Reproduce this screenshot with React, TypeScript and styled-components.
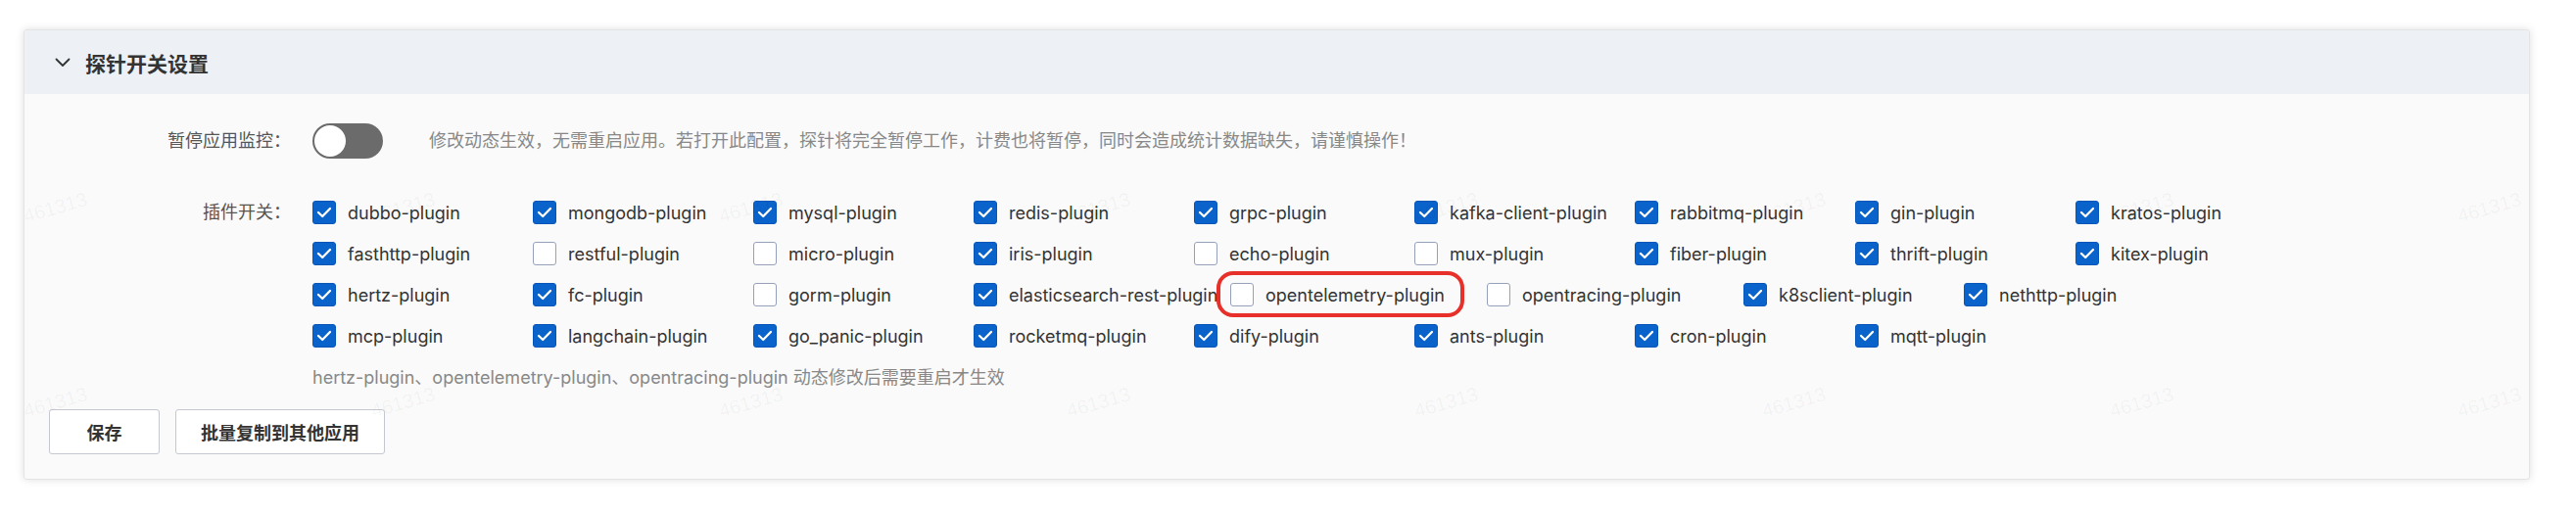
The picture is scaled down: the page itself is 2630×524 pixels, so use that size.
import React from "react";
import styled, { createGlobalStyle, css } from "styled-components";

const GlobalStyle = createGlobalStyle`
  html, body { margin: 0; padding: 0; background: #ffffff; }
  body {
    font-family: Inter, "Noto Sans CJK SC", sans-serif;
    font-size: 18px;
    color: #333;
    -webkit-font-smoothing: antialiased;
  }
  * { box-sizing: border-box; }
`;

const Page = styled.div`
  position: relative;
  width: 2630px;
  height: 524px;
  padding: 30px 47px 0 24px;
  overflow: hidden;
`;

const Card = styled.section`
  background: #fafafa;
  border: 1px solid #e4e4e4;
  border-radius: 3px;
  box-shadow: 0 0 8px rgba(0, 0, 0, 0.13);
  overflow: hidden;
`;

const Header = styled.div`
  height: 65px;
  background: #edf0f5;
  display: flex;
  align-items: center;
  gap: 15px;
  padding-left: 31px;
`;

const Title = styled.h3`
  margin: 0;
  font-size: 21px;
  font-weight: 600;
  color: #333;
  letter-spacing: 0;
`;

const Body = styled.div`
  padding: 30px 0 25px 0;
`;

const FormItem = styled.div<{ $top?: number; $align?: string }>`
  display: flex;
  align-items: ${(p) => p.$align || "center"};
  margin-top: ${(p) => p.$top || 0}px;
`;

const Label = styled.label<{ $lh?: number }>`
  width: 272px;
  flex: none;
  text-align: right;
  color: #555;
  font-size: 18px;
  line-height: ${(p) => p.$lh || 36}px;
`;

const Control = styled.div`
  margin-left: 22px;
  display: flex;
  flex-direction: column;
`;

const InlineControl = styled.div`
  margin-left: 22px;
  display: flex;
  align-items: center;
`;

const SwitchTrack = styled.button`
  width: 72px;
  height: 36px;
  border: none;
  border-radius: 18px;
  background: #6b6b6b;
  padding: 2px;
  display: flex;
  align-items: center;
  cursor: pointer;
`;

const SwitchKnob = styled.span`
  width: 32px;
  height: 32px;
  border-radius: 50%;
  background: #ffffff;
`;

const Description = styled.span`
  margin-left: 47px;
  color: #888;
  font-size: 18px;
  line-height: 24px;
`;

const PluginGrid = styled.div`
  display: flex;
  flex-wrap: wrap;
  width: 2030px;
`;

const PluginItem = styled.label<{ $wide?: boolean; $marked?: boolean }>`
  position: relative;
  height: 42px;
  width: ${(p) => (p.$wide ? 262 : 225)}px;
  display: flex;
  align-items: center;
  gap: 12px;
  color: #333;
  font-size: 18px;
  white-space: nowrap;
  ${(p) =>
    p.$marked &&
    css`
      &::after {
        content: "";
        position: absolute;
        top: -3px;
        bottom: -2px;
        left: -14px;
        right: 23px;
        border: 4px solid #e8302a;
        border-radius: 17px;
        pointer-events: none;
      }
    `}
`;

const Box = styled.span<{ $checked: boolean }>`
  width: 24px;
  height: 24px;
  flex: none;
  border-radius: 3px;
  display: flex;
  align-items: center;
  justify-content: center;
  ${(p) =>
    p.$checked
      ? css`
          background: #0a62cb;
          border: 1px solid #0857b8;
        `
      : css`
          background: #ffffff;
          border: 1.5px solid #95a1bb;
        `}
`;

const Hint = styled.div`
  margin-top: 10px;
  color: #888;
  font-size: 18px;
  line-height: 24px;
`;

const ButtonRow = styled.div`
  display: flex;
  gap: 16px;
  margin-top: 20px;
  padding-left: 25px;
`;

const Button = styled.button`
  height: 46px;
  min-width: 113px;
  padding: 0 25px;
  background: #ffffff;
  border: 1px solid #c5c8d0;
  border-radius: 3px;
  font-family: inherit;
  font-size: 18px;
  font-weight: 600;
  color: #333;
  cursor: pointer;
`;

const WatermarkLayer = styled.div`
  position: absolute;
  inset: 0;
  pointer-events: none;
  display: grid;
  grid-template-columns: repeat(8, 355px);
  grid-auto-rows: 199px;
  padding: 202px 0 0 23px;
`;

const Watermark = styled.span`
  width: 66px;
  height: 20px;
  font-family: "Liberation Sans", sans-serif;
  font-size: 20px;
  line-height: 20px;
  color: rgba(0, 0, 0, 0.045);
  transform: rotate(-16deg);
`;

const Chevron = () => (
  <svg width="16" height="10" viewBox="0 0 16 10" fill="none">
    <path d="M1.5 1.5 L8 8 L14.5 1.5" stroke="#333" strokeWidth="1.8" strokeLinecap="round" strokeLinejoin="round" />
  </svg>
);

const Tick = () => (
  <svg width="16" height="16" viewBox="0 0 16 16" fill="none">
    <path d="M2 8 L6.2 12 L14 4" stroke="#fff" strokeWidth="2.3" strokeLinecap="round" strokeLinejoin="round" />
  </svg>
);

type Plugin = { name: string; checked: boolean; wide?: boolean; marked?: boolean };

const plugins: Plugin[] = [
  { name: "dubbo-plugin", checked: true },
  { name: "mongodb-plugin", checked: true },
  { name: "mysql-plugin", checked: true },
  { name: "redis-plugin", checked: true },
  { name: "grpc-plugin", checked: true },
  { name: "kafka-client-plugin", checked: true },
  { name: "rabbitmq-plugin", checked: true },
  { name: "gin-plugin", checked: true },
  { name: "kratos-plugin", checked: true },
  { name: "fasthttp-plugin", checked: true },
  { name: "restful-plugin", checked: false },
  { name: "micro-plugin", checked: false },
  { name: "iris-plugin", checked: true },
  { name: "echo-plugin", checked: false },
  { name: "mux-plugin", checked: false },
  { name: "fiber-plugin", checked: true },
  { name: "thrift-plugin", checked: true },
  { name: "kitex-plugin", checked: true },
  { name: "hertz-plugin", checked: true },
  { name: "fc-plugin", checked: true },
  { name: "gorm-plugin", checked: false },
  { name: "elasticsearch-rest-plugin", checked: true, wide: true },
  { name: "opentelemetry-plugin", checked: false, wide: true, marked: true },
  { name: "opentracing-plugin", checked: false, wide: true },
  { name: "k8sclient-plugin", checked: true },
  { name: "nethttp-plugin", checked: true },
  { name: "mcp-plugin", checked: true },
  { name: "langchain-plugin", checked: true },
  { name: "go_panic-plugin", checked: true },
  { name: "rocketmq-plugin", checked: true },
  { name: "dify-plugin", checked: true },
  { name: "ants-plugin", checked: true },
  { name: "cron-plugin", checked: true },
  { name: "mqtt-plugin", checked: true },
];

export default function App() {
  return (
    <>
      <GlobalStyle />
      <Page>
        <Card>
          <Header>
            <Chevron />
            <Title>探针开关设置</Title>
          </Header>
          <Body>
            <FormItem>
              <Label>暂停应用监控：</Label>
              <InlineControl>
                <SwitchTrack aria-label="暂停应用监控">
                  <SwitchKnob />
                </SwitchTrack>
                <Description>
                  修改动态生效，无需重启应用。若打开此配置，探针将完全暂停工作，计费也将暂停，同时会造成统计数据缺失，请谨慎操作！
                </Description>
              </InlineControl>
            </FormItem>
            <FormItem $top={34} $align="flex-start">
              <Label $lh={42}>插件开关：</Label>
              <Control>
                <PluginGrid>
                  {plugins.map((p) => (
                    <PluginItem key={p.name} $wide={p.wide} $marked={p.marked}>
                      <Box $checked={p.checked}>{p.checked && <Tick />}</Box>
                      {p.name}
                    </PluginItem>
                  ))}
                </PluginGrid>
                <Hint>hertz-plugin、opentelemetry-plugin、opentracing-plugin 动态修改后需要重启才生效</Hint>
              </Control>
            </FormItem>
            <ButtonRow>
              <Button>保存</Button>
              <Button>批量复制到其他应用</Button>
            </ButtonRow>
          </Body>
        </Card>
        <WatermarkLayer>
          {Array.from({ length: 16 }).map((_, i) => (
            <Watermark key={i}>461313</Watermark>
          ))}
        </WatermarkLayer>
      </Page>
    </>
  );
}
